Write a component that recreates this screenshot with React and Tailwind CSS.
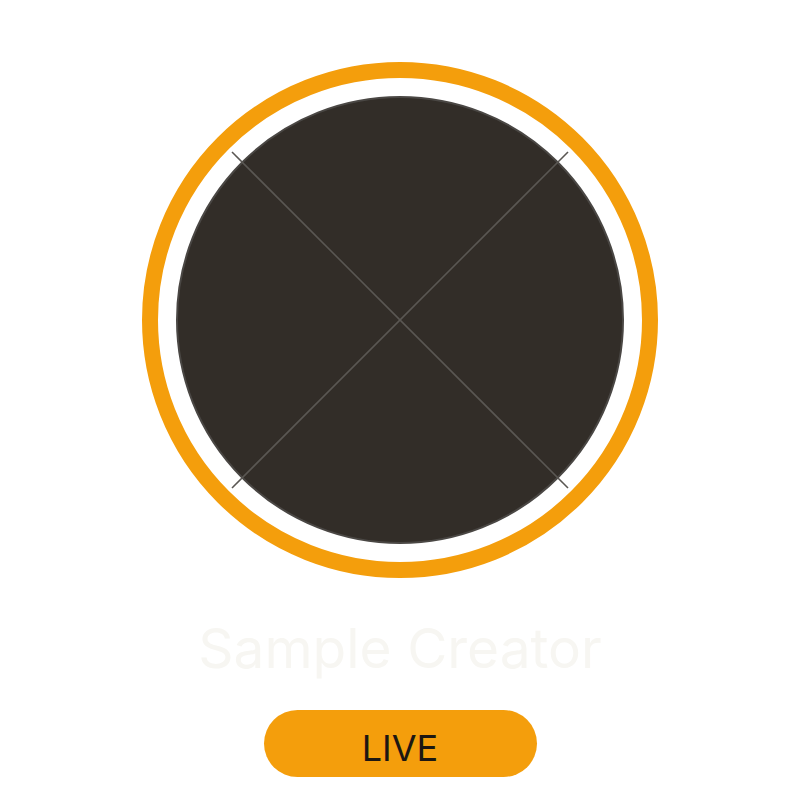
export default function App() {
  return (
    <div className="flex min-h-[800px] w-full flex-col items-center bg-white pt-[62px] font-['Inter',sans-serif]">
      {/* Avatar ring */}
      <div className="relative flex h-[516px] w-[516px] items-center justify-center rounded-full border-[16px] border-[#f49e0c]">
        <div className="h-[448px] w-[448px] rounded-full border-2 border-[#4a4744] bg-[#322d28]" />
        <svg
          className="absolute left-1/2 top-1/2 h-[340px] w-[340px] -translate-x-1/2 -translate-y-1/2"
          viewBox="0 0 340 340"
          fill="none"
        >
          <line x1="2" y1="2" x2="338" y2="338" stroke="#5a5753" strokeWidth="1.6" />
          <line x1="338" y1="2" x2="2" y2="338" stroke="#5a5753" strokeWidth="1.6" />
        </svg>
      </div>

      <div className="mt-[38px] text-[55px] leading-[64px] text-[#f7f6f2]">
        Sample Creator
      </div>

      <button
        type="button"
        className="mt-[30px] flex h-[67px] w-[273px] items-center justify-center rounded-full bg-[#f49e0c] pt-2 text-[36px] text-[#1c1712]"
      >
        LIVE
      </button>
    </div>
  );
}
